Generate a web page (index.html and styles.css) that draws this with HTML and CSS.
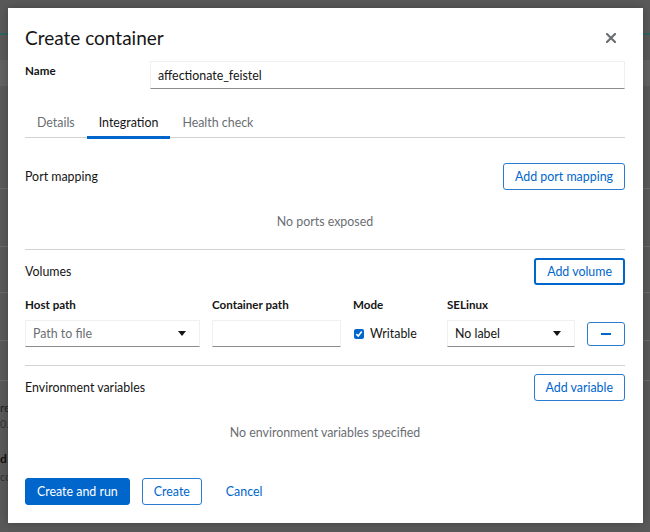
FILE: index.html
```html
<!DOCTYPE html>
<html>
<head>
<meta charset="utf-8">
<link rel="stylesheet" href="styles.css">
</head>
<body>
<div class="backdrop">
  <div class="bg-bar"></div>
  <div class="bg-band"></div>
  <div class="bg-lines">
    <div class="bg-line l1"></div>
    <div class="bg-line l2"></div>
    <div class="bg-line l3"></div>
    <div class="bg-line l4"></div>
    <div class="bg-line l5"></div>
  </div>
  <div class="bg-text">
    <div class="bg-t1">re</div>
    <div class="bg-t2">0.3</div>
    <div class="bg-t3">d</div>
    <div class="bg-t4">co</div>
  </div>
</div>

<div class="modal">
  <header class="modal-header">
    <h1 class="modal-title">Create container</h1>
    <button class="close-btn" aria-label="Close">
      <svg width="10" height="10" viewBox="0 0 10 10"><path d="M1 1 L9 9 M9 1 L1 9" stroke="#6a6e73" stroke-width="2.2" stroke-linecap="square"/></svg>
    </button>
  </header>

  <div class="name-row">
    <label class="field-label">Name</label>
    <div class="text-input name-input">affectionate_feistel</div>
  </div>

  <nav class="tabs">
    <span class="tab">Details</span>
    <span class="tab active">Integration</span>
    <span class="tab">Health check</span>
  </nav>

  <section class="section first">
    <div class="section-head">
      <span class="section-title">Port mapping</span>
      <button class="btn btn-secondary">Add port mapping</button>
    </div>
    <div class="empty">No ports exposed</div>
  </section>

  <hr class="divider">

  <section class="section">
    <div class="section-head">
      <span class="section-title">Volumes</span>
      <button class="btn btn-secondary focused">Add volume</button>
    </div>
    <div class="vol-grid">
      <div class="col-head">Host path</div>
      <div class="col-head">Container path</div>
      <div class="col-head">Mode</div>
      <div class="col-head">SELinux</div>
      <div></div>

      <div class="text-input select placeholder"><span>Path to file</span><span class="caret"></span></div>
      <div class="text-input"></div>
      <label class="check"><span class="checkbox"><svg width="8" height="8" viewBox="0 0 8 8"><path d="M1.3 4.2 L3.2 6 L6.8 1.6" stroke="#fff" stroke-width="1.6" fill="none"/></svg></span>Writable</label>
      <div class="text-input select"><span>No label</span><span class="caret"></span></div>
      <button class="btn btn-secondary minus"><span class="minus-bar"></span></button>
    </div>
  </section>

  <hr class="divider">

  <section class="section">
    <div class="section-head">
      <span class="section-title">Environment variables</span>
      <button class="btn btn-secondary">Add variable</button>
    </div>
    <div class="empty">No environment variables specified</div>
  </section>

  <footer class="footer">
    <button class="btn btn-primary">Create and run</button>
    <button class="btn btn-secondary">Create</button>
    <button class="btn btn-link">Cancel</button>
  </footer>
</div>
</body>
</html>
```

FILE: styles.css
```css
* { box-sizing: border-box; }
html, body { margin: 0; padding: 0; }
body {
  width: 650px;
  height: 532px;
  background: #595959;
  font-family: Lato, "Open Sans", sans-serif;
  font-size: 12.4px;
  color: #151515;
  overflow: hidden;
  position: relative;
}

.backdrop { position: absolute; inset: 0; }
.bg-bar { position: absolute; left: 0; right: 0; top: 33px; height: 2px; background: #2e6364; }
.bg-band { position: absolute; left: 0; right: 0; top: 60px; height: 26px; background: #626262; }
.bg-line { position: absolute; left: 0; right: 0; height: 1px; background: #6a6a6a; }
.l1 { top: 188px; } .l2 { top: 246px; } .l3 { top: 292px; } .l4 { top: 340px; } .l5 { top: 380px; }
.bg-text { position: absolute; left: 0; top: 400px; font-size: 12px; }
.bg-t1 { position: absolute; top: 0; left: 0; color: #222; }
.bg-t2 { position: absolute; top: 17px; left: 0; color: #333; font-size: 11px; }
.bg-t3 { position: absolute; top: 51px; left: 0; color: #111; font-weight: bold; }
.bg-t4 { position: absolute; top: 70px; left: 0; color: #333; font-size: 11px; }

.modal {
  position: absolute;
  left: 8px;
  top: 8px;
  width: 635px;
  height: 515px;
  background: #fff;
  box-shadow: 0 0 8px rgba(0,0,0,0.25);
  padding: 18px 18px 18px 17px;
  display: flex;
  flex-direction: column;
}

.modal-header { display: flex; align-items: center; justify-content: space-between; height: 24px; }
.modal-title { margin: 0; font-size: 19px; font-weight: 400; line-height: 24px; color: #151515; }
.close-btn { background: none; border: 0; padding: 0; width: 12px; height: 12px; margin-right: 8px; display: flex; align-items: center; justify-content: center; }

.name-row { display: flex; margin-top: 11px; }
.field-label { width: 125px; font-weight: 700; font-size: 11.6px; padding-top: 3px; }

.text-input {
  height: 27px;
  border: 1px solid #f0f0f0;
  border-bottom-color: #8a8d90;
  padding: 0 7px;
  display: flex;
  align-items: center;
  font-size: 12.4px;
  color: #151515;
  background: #fff;
}
.name-input { flex: 1; height: 28px; }

.tabs { display: flex; margin-top: 19px; border-bottom: 1px solid #d2d2d2; height: 30px; }
.tab { padding: 0 12px; color: #6a6e73; display: flex; align-items: center; height: 29px; position: relative; }
.tab.active { color: #151515; }
.tab.active::after { content: ""; position: absolute; left: 0; right: 0; bottom: -2px; height: 3px; background: #0066cc; }

.section { display: flex; flex-direction: column; }
.section.first { margin-top: 25px; }
.section-head { display: flex; align-items: center; justify-content: space-between; }
.section-title { font-size: 12.4px; }

.btn {
  font-family: inherit;
  font-size: 12.4px;
  height: 27px;
  padding: 0 11px;
  border-radius: 3px;
  cursor: pointer;
  display: inline-flex;
  align-items: center;
  justify-content: center;
}
.btn-secondary { background: #fff; border: 1px solid #2b7bd1; color: #0066cc; }
.btn-secondary.focused { border: 2px solid #0066cc; }
.btn-primary { background: #0066cc; border: 1px solid #0066cc; color: #fff; }
.btn-link { background: none; border: 0; color: #0066cc; }

.empty { text-align: center; color: #6a6e73; line-height: 18px; margin-top: 23px; margin-bottom: 18px; }

.divider { border: 0; border-top: 1px solid #d2d2d2; margin: 0 0 8px 0; }

.vol-grid {
  display: grid;
  grid-template-columns: 175px 129px 82px 128px 38px;
  column-gap: 12px;
  row-gap: 7px;
  margin-top: 12px;
  margin-bottom: 18px;
  align-items: center;
}
.col-head { font-weight: 700; font-size: 11.6px; line-height: 16px; }
.select { justify-content: space-between; }
.placeholder { color: #6a6e73; }
.caret { width: 0; height: 0; border-left: 4.5px solid transparent; border-right: 4.5px solid transparent; border-top: 5px solid #151515; margin-right: 6px; }
.check { display: flex; align-items: center; gap: 6px; padding-left: 1px; }
.checkbox { width: 10px; height: 10px; border-radius: 2px; background: #0066cc; display: flex; align-items: center; justify-content: center; }
.minus { width: 38px; height: 24px; padding: 0; }
.minus-bar { width: 10px; height: 2px; background: #0066cc; }

.footer { display: flex; gap: 12px; margin-top: auto; align-items: center; }
.footer .btn-link { margin-left: 1px; }
```
